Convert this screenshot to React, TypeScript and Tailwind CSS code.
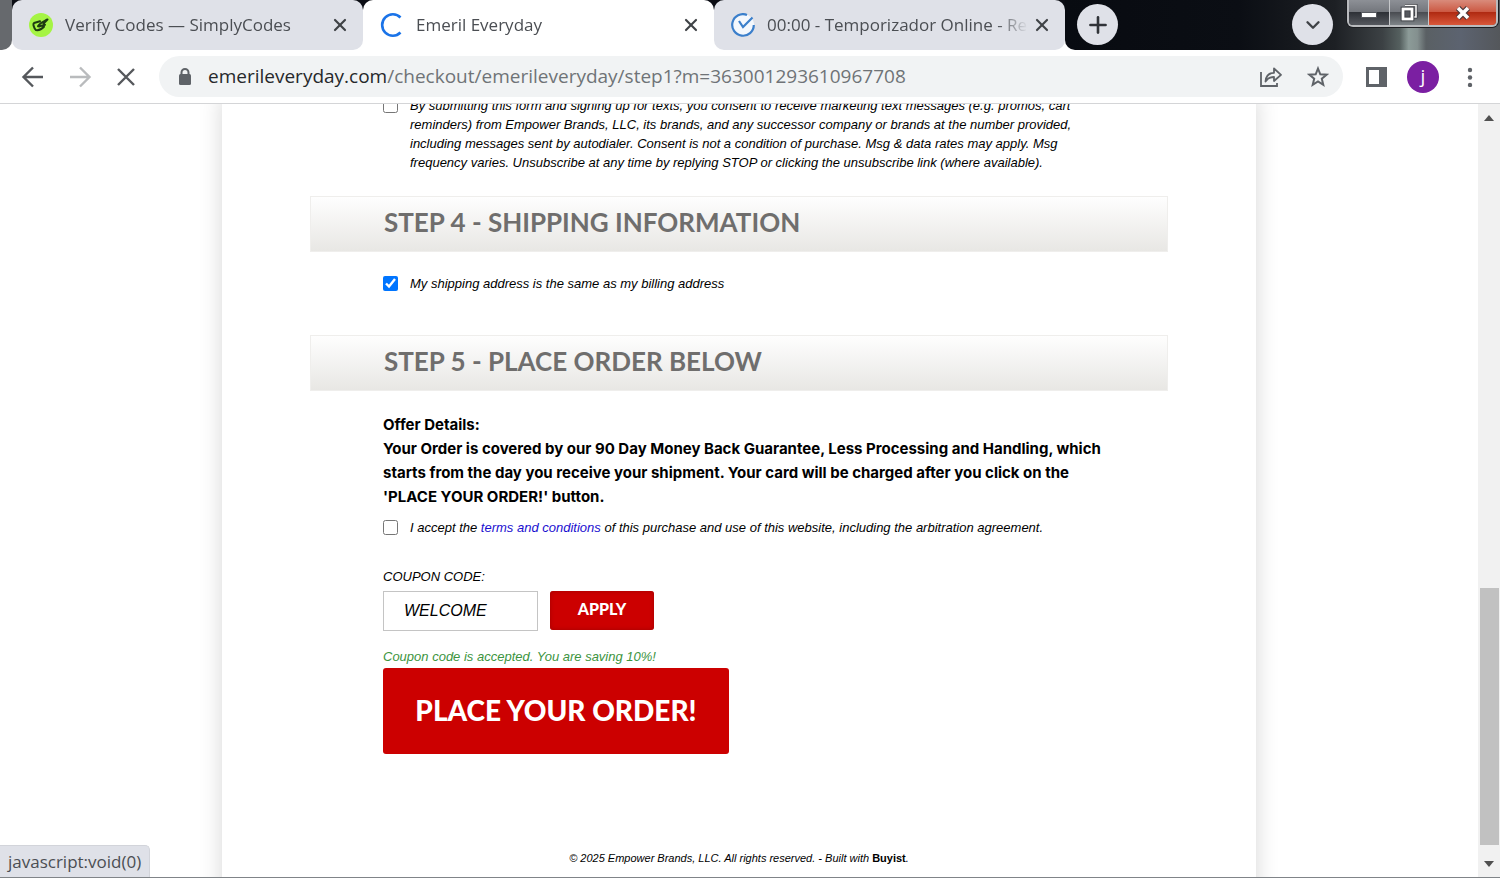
import { ChevronDown, Plus, X } from "lucide-react";
import React from "react";

interface TabProps {
  title: string;
  icon: React.ReactNode;
  active?: boolean;
}

function Tab({ title, icon, active }: TabProps) {
  return (
    <div
      className={
        active
          ? "flex flex-1 min-w-0 items-center rounded-t-[10px] bg-white pl-[17px] pr-[13px]"
          : "flex flex-1 min-w-0 items-center rounded-[10px] bg-[#dfe1e8] pl-[17px] pr-[13px]"
      }
    >
      {icon}
      <span className="ml-3 flex-1 overflow-hidden whitespace-nowrap text-[17px] text-[#4b4e53] [mask-image:linear-gradient(to_right,black_88%,transparent)]">
        {title}
      </span>
      <button aria-label="Close tab" className="ml-1 text-[#3f4246]">
        <X size={20} strokeWidth={2.6} />
      </button>
    </div>
  );
}

function SimplyIcon() {
  return (
    <svg width="24" height="24" viewBox="0 0 24 24" className="shrink-0">
      <circle cx="12" cy="12" r="12" fill="#a5f444" />
      <path
        d="M11 8.300 L5 10 C3.600 10.800 5.200 15.800 6.800 17 C9 17.400 12.500 16.500 15 13.800 M9 13.300 C10.500 10.200 13.500 9.200 18.500 6.500 M10 13.500 L16 11.800 M14.500 10.500 L18.500 6.500"
        fill="none"
        stroke="#1d3a12"
        strokeWidth="2"
        strokeLinecap="round"
        strokeLinejoin="round"
      />
    </svg>
  );
}

function LoadingIcon() {
  return (
    <svg width="24" height="24" viewBox="0 0 24 24" className="shrink-0">
      <path d="M20.500 4.500 A10.700 10.700 0 1 0 20.500 19.500" fill="none" stroke="#1a73e8" strokeWidth="2.6" />
    </svg>
  );
}

function TimerIcon() {
  return (
    <svg width="24" height="24" viewBox="0 0 24 24" className="shrink-0">
      <circle cx="12" cy="12" r="11" fill="#f4f8fd" />
      <path d="M16 1.900 A10.800 10.800 0 1 0 22.800 12" fill="none" stroke="#3b7fcb" strokeWidth="2.200" />
      <path d="M8 8 L12 14 L21.500 4.500" fill="none" stroke="#3b7fcb" strokeWidth="2.200" />
    </svg>
  );
}

function WindowButtons() {
  return (
    <div className="flex h-[27px] w-[151px] shrink-0 overflow-hidden rounded-b-md border-2 border-t-0 border-[#b9bbbe] ring-1 ring-[#1c1e22]">
      <button
        aria-label="Minimize"
        className="flex w-[41px] items-center justify-center border-r border-[#c5c7ca] bg-[linear-gradient(#8d9096_0%,#74777d_46%,#2e3137_50%,#55585e_100%)]"
      >
        <span className="mt-1 h-[6px] w-[16px] border border-[#55585e] bg-white" />
      </button>
      <button
        aria-label="Restore"
        className="flex w-[39px] items-center justify-center border-r border-[#c5c7ca] bg-[linear-gradient(#8d9096_0%,#74777d_46%,#4a4d52_50%,#7e8488_100%)]"
      >
        <svg width="18" height="18" viewBox="0 0 18 18">
          <path d="M5 1.500 H16 V13 H13.500" fill="none" stroke="#3a3d42" strokeWidth="3" />
          <path d="M5 1.500 H16 V13 H13.500" fill="none" stroke="#f5f5f5" strokeWidth="1.600" />
          <rect x="3" y="5" width="9" height="10" fill="#55585e" stroke="#3a3d42" strokeWidth="4.600" />
          <rect x="3" y="5" width="9" height="10" fill="none" stroke="#fff" strokeWidth="2.800" />
        </svg>
      </button>
      <button
        aria-label="Close"
        className="flex flex-1 items-center justify-center bg-[linear-gradient(#d98b7b_0%,#cc5a44_46%,#b02a12_50%,#d9573a_100%)]"
      >
        <svg width="18" height="16" viewBox="0 0 18 16">
          <path d="M4 3 L14 13 M14 3 L4 13" stroke="#4c3a3c" strokeWidth="6" />
          <path d="M4 3 L14 13 M14 3 L4 13" stroke="#fff" strokeWidth="3.600" />
        </svg>
      </button>
    </div>
  );
}

function TabStrip() {
  return (
    <div className="flex h-[50px] shrink-0 bg-white">
      <div className="w-3 shrink-0 rounded-br-[10px] bg-[#66696d]" />
      <div className="flex min-w-0 flex-[1053] bg-[linear-gradient(#0b0d14_50%,white_50%)]">
        <Tab title="Verify Codes — SimplyCodes" icon={<SimplyIcon />} />
        <Tab title="Emeril Everyday" icon={<LoadingIcon />} active />
        <Tab title="00:00 - Temporizador Online - Re" icon={<TimerIcon />} />
      </div>
      <div className="flex min-w-0 flex-[435] rounded-bl-[10px] bg-[linear-gradient(to_right,#080b11_0%,#0b0e14_40%,#1d2024_62%,#3c4144_73%,#55605f_77%,#8c9b98_79%,#84908f_81%,#5a6064_83%,#5c6370_91%,#54575b_100%)]">
        <button
          aria-label="New tab"
          className="ml-3 mt-1 flex size-[41px] shrink-0 items-center justify-center rounded-full bg-[#dfe1e8] text-[#303338]"
        >
          <Plus size={26} strokeWidth={2.4} />
        </button>
        <button
          aria-label="Search tabs"
          className="ml-auto mr-[14px] mt-1 flex size-[41px] shrink-0 items-center justify-center rounded-full bg-[#dfe1e8] text-[#3f4246]"
        >
          <ChevronDown size={22} strokeWidth={2.6} />
        </button>
        <WindowButtons />
        <div className="w-[2px] shrink-0" />
      </div>
    </div>
  );
}

function Toolbar() {
  return (
    <div className="flex h-[54px] shrink-0 items-center border-b border-[#d4d5d7] bg-white text-[#5f6368]">
      <button aria-label="Back" className="ml-[21px]">
        <svg width="24" height="24" viewBox="0 0 24 24" fill="none" stroke="#55585c" strokeWidth="2.400">
          <path d="M22 12 H3 M12 2.500 L2.500 12 L12 21.500" />
        </svg>
      </button>
      <button aria-label="Forward" className="ml-[23px]">
        <svg width="24" height="24" viewBox="0 0 24 24" fill="none" stroke="#b9bbbd" strokeWidth="2.400">
          <path d="M2 12 H21 M12 2.500 L21.500 12 L12 21.500" />
        </svg>
      </button>
      <button aria-label="Stop" className="ml-[23px]">
        <svg width="22" height="22" viewBox="0 0 22 22" fill="none" stroke="#55585c" strokeWidth="2.400">
          <path d="M3 3 L19 19 M19 3 L3 19" />
        </svg>
      </button>
      <div className="ml-[22px] flex h-[41px] min-w-0 flex-1 items-center rounded-full bg-[#f1f3f4] pl-[19px] pr-[14px]">
        <svg width="14" height="18" viewBox="0 0 14 18" className="shrink-0">
          <rect x="1" y="6" width="12" height="11" rx="1.500" fill="#5f6368" />
          <path d="M3.500 7 V4.500 A3.500 3.500 0 0 1 10.500 4.500 V7" fill="none" stroke="#5f6368" strokeWidth="2" />
        </svg>
        <span className="ml-4 flex-1 overflow-hidden whitespace-nowrap text-[19px] text-[#6f7377]">
          <span className="text-[#26282b]">emerileveryday.com</span>/checkout/emerileveryday/step1?m=363001293610967708
        </span>
        <button aria-label="Share">
          <svg width="24" height="22" viewBox="0 0 24 22" fill="none" stroke="#5f6368" strokeWidth="1.800">
            <path d="M2 6 V20 H18 V17" />
            <path
              d="M6.500 15.500 C7 9.500 10 7 15 6.800 V2.500 L22 8.800 L15 15 V11 C11 11 8.500 12.500 6.500 15.500 Z"
              strokeLinejoin="round"
            />
          </svg>
        </button>
        <button aria-label="Bookmark" className="ml-6">
          <svg width="22" height="22" viewBox="0 0 22 22" fill="none" stroke="#5f6368" strokeWidth="2">
            <path d="M11 2.500 L13.300 8.300 L19.600 8.700 L14.800 12.700 L16.300 18.900 L11 15.500 L5.700 18.900 L7.200 12.700 L2.400 8.700 L8.700 8.300 Z" />
          </svg>
        </button>
      </div>
      <button aria-label="Side panel" className="ml-[23px]">
        <svg width="21" height="20" viewBox="0 0 21 20">
          <rect width="21" height="20" fill="#5f6368" />
          <rect x="3" y="3" width="10" height="14" fill="#fff" />
        </svg>
      </button>
      <button
        aria-label="Profile"
        className="ml-5 flex size-8 shrink-0 items-center justify-center rounded-full bg-[#7b1fa2] text-[19px] leading-none text-white"
      >
        j
      </button>
      <button aria-label="Menu" className="ml-7 mr-[27px]">
        <svg width="6" height="20" viewBox="0 0 6 20" fill="#5f6368">
          <circle cx="3" cy="3" r="2.200" />
          <circle cx="3" cy="10.500" r="2.200" />
          <circle cx="3" cy="18" r="2.200" />
        </svg>
      </button>
    </div>
  );
}

function StepHeading({ children }: { children: React.ReactNode }) {
  return (
    <h2 className="flex h-14 items-center border border-[#efeeec] bg-[linear-gradient(#fefefe,#e8e7e4)] pb-1 pl-[73px] font-['Lato'] text-[26px] font-bold text-[#6f6e6d]">
      {children}
    </h2>
  );
}

interface CheckRowProps {
  id: string;
  checked?: boolean;
  children: React.ReactNode;
}

function CheckRow({ id, checked, children }: CheckRowProps) {
  return (
    <div className="flex items-start">
      <input
        id={id}
        type="checkbox"
        defaultChecked={checked}
        className="mt-[2px] size-[15px] shrink-0 accent-[#0075ff]"
      />
      <label htmlFor={id} className="ml-3 flex-1">
        {children}
      </label>
    </div>
  );
}

function Checkout() {
  return (
    <main className="mx-auto min-h-full w-full max-w-[1034px] bg-white px-[88px] pb-10 font-['Liberation_Sans',sans-serif] text-[13px] italic leading-[19px] text-black shadow-[0_0_22px_rgba(0,0,0,0.16)]">
      <div className="-mt-2 pl-[73px] pr-[72px]">
        <CheckRow id="texts">
          By submitting this form and signing up for texts, you consent to receive marketing text messages (e.g.
          promos, cart reminders) from Empower Brands, LLC, its brands, and any successor company or brands at the
          number provided, including messages sent by autodialer. Consent is not a condition of purchase. Msg &amp;
          data rates may apply. Msg frequency varies. Unsubscribe at any time by replying STOP or clicking the
          unsubscribe link (where available).
        </CheckRow>
      </div>
      <div className="mt-6 not-italic">
        <StepHeading>STEP 4 - SHIPPING INFORMATION</StepHeading>
      </div>
      <div className="mt-[22px] pl-[73px]">
        <CheckRow id="same" checked>
          My shipping address is the same as my billing address
        </CheckRow>
      </div>
      <div className="mt-[42px] not-italic">
        <StepHeading>STEP 5 - PLACE ORDER BELOW</StepHeading>
      </div>
      <div className="mt-[22px] pl-[73px] pr-[60px]">
        <div className="font-['Inter'] text-[15px] font-bold not-italic leading-6 text-black">
          <p>Offer Details:</p>
          <p>
            Your Order is covered by our 90 Day Money Back Guarantee, Less Processing and Handling, which starts from
            the day you receive your shipment. Your card will be charged after you click on the 'PLACE YOUR ORDER!'
            button.
          </p>
        </div>
        <div className="mt-[9px]">
          <CheckRow id="accept">
            I accept the{" "}
            <a href="#terms" className="text-[#1a0fd0]">
              terms and conditions
            </a>{" "}
            of this purchase and use of this website, including the arbitration agreement.
          </CheckRow>
        </div>
        <label htmlFor="coupon" className="mt-[30px] block">
          COUPON CODE:
        </label>
        <div className="mt-[5px] flex items-start gap-3">
          <input
            id="coupon"
            defaultValue="WELCOME"
            className="h-10 w-[155px] border border-[#c4c4c4] pl-5 text-[16px] italic text-black"
          />
          <button className="h-[39px] w-[104px] rounded-[3px] bg-[#cc0000] pb-1 font-['Lato'] text-[16px] font-black not-italic text-white shadow-[inset_0_0_4px_#a00000]">
            APPLY
          </button>
        </div>
        <p className="mt-4 text-[#3c9440]">Coupon code is accepted. You are saving 10%!</p>
        <button className="mt-[2px] h-[86px] w-[346px] rounded-[3px] bg-[#cc0000] pb-[2px] font-['Lato'] text-[28px] font-black not-italic text-white">
          PLACE YOUR ORDER!
        </button>
      </div>
      <footer className="mt-[95px] text-center text-[11px]">
        © 2025 Empower Brands, LLC. All rights reserved. - Built with{" "}
        <a href="#buyist" className="font-bold not-italic text-black">
          Buyist
        </a>
        .
      </footer>
    </main>
  );
}

function Scrollbar() {
  return (
    <div className="flex w-[22px] shrink-0 flex-col items-center bg-[#f1f1f1] pb-[10px] pt-[11px]">
      <svg width="10" height="6" viewBox="0 0 10 6">
        <path d="M0 6 L5 0 L10 6 Z" fill="#505050" />
      </svg>
      <div className="flex-[467]" />
      <div className="w-[19px] flex-[257] bg-[#c1c1c1]" />
      <div className="h-[16px]" />
      <svg width="10" height="6" viewBox="0 0 10 6">
        <path d="M0 0 L5 6 L10 0 Z" fill="#505050" />
      </svg>
    </div>
  );
}

export default function App() {
  return (
    <div className="relative flex h-screen flex-col overflow-hidden border-b border-[#808488] bg-white font-['Open_Sans',sans-serif]">
      <TabStrip />
      <Toolbar />
      <div className="flex min-h-0 flex-1">
        <div className="min-w-0 flex-1 overflow-hidden">
          <Checkout />
        </div>
        <Scrollbar />
      </div>
      <div className="absolute bottom-0 left-0 flex h-8 items-center rounded-tr-[5px] border border-b-0 border-l-0 border-[#d2d4da] bg-[#dfe1e8] px-2 text-[17px] text-[#4b4e53]">
        javascript:void(0)
      </div>
    </div>
  );
}
